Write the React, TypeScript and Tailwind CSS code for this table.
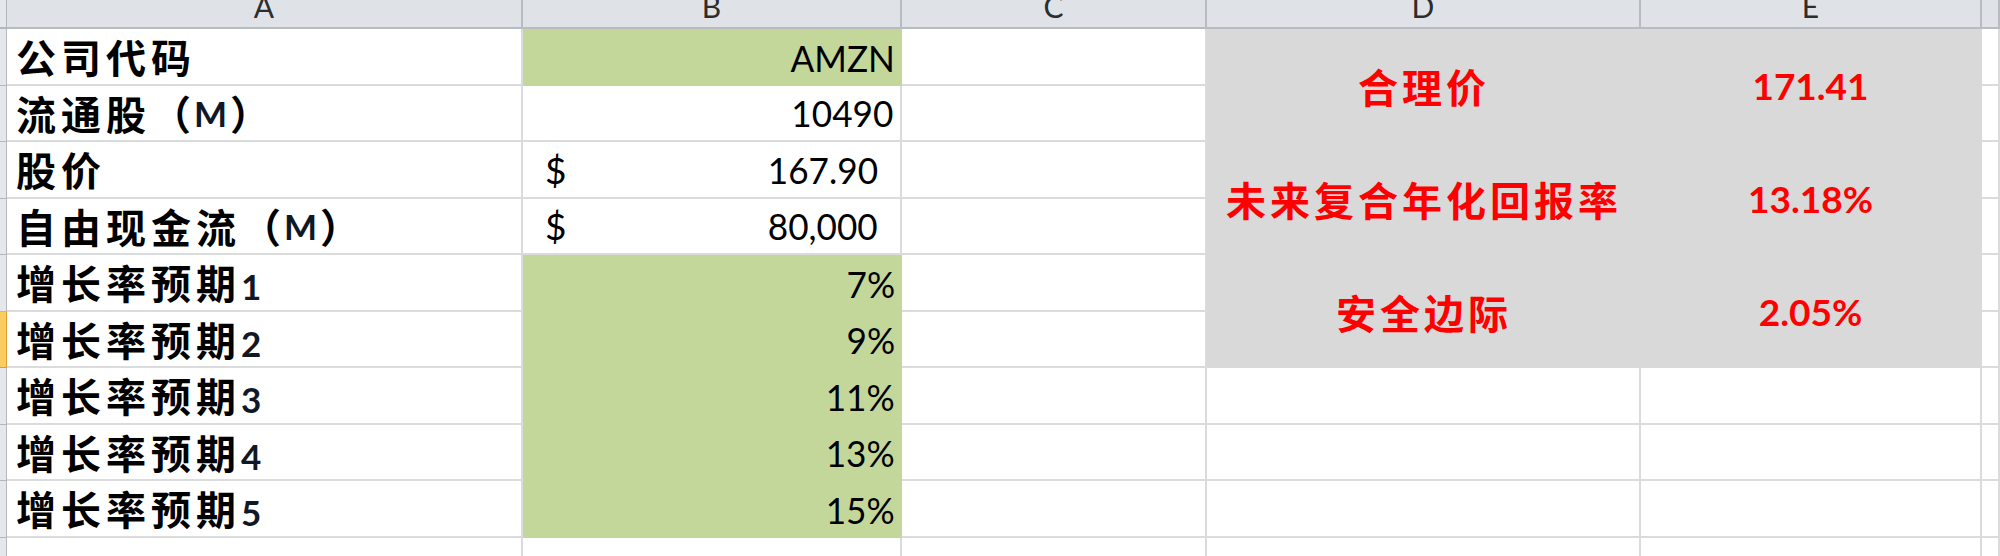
const cjk = '[font-family:"Noto_Sans_CJK_SC","Noto_Sans",sans-serif]';
const latin = '[font-family:Lato,"Open_Sans",sans-serif]';

const cols = ['A', 'B', 'C', 'D', 'E', ''];

const rows: { label: string; tail?: string; tailParen?: boolean; value: string; dollar?: boolean; green?: boolean }[] = [
  { label: '公司代码', value: 'AMZN', green: true },
  { label: '流通股', tail: 'M', tailParen: true, value: '10490' },
  { label: '股价', value: '167.90', dollar: true },
  { label: '自由现金流', tail: 'M', tailParen: true, value: '80,000', dollar: true },
  { label: '增长率预期', tail: '1', value: '7%', green: true },
  { label: '增长率预期', tail: '2', value: '9%', green: true },
  { label: '增长率预期', tail: '3', value: '11%', green: true },
  { label: '增长率预期', tail: '4', value: '13%', green: true },
  { label: '增长率预期', tail: '5', value: '15%', green: true },
];

const summary = [
  { label: '合理价', value: '171.41' },
  { label: '未来复合年化回报率', value: '13.18%' },
  { label: '安全边际', value: '2.05%' },
];

const line = 'border-r-2 border-b-2 border-[#dadbdc]';

function RowHead({ active = false }: { active?: boolean }) {
  return (
    <div
      className={`border-r border-b ${active ? 'border-[#e39d2e] bg-[#f9cd62]' : 'border-[#b3b7bc] bg-[#e4e7eb]'}`}
    />
  );
}

function Label({ label, tail, tailParen }: { label: string; tail?: string; tailParen?: boolean }) {
  return (
    <div className={`flex items-center pl-[9px] ${line}`}>
      <span className={`${cjk} text-[40px] font-bold tracking-[5px] text-black`}>{label}</span>
      {tail && tailParen && (
        <span className="flex items-center">
          <span className={`${cjk} text-[40px] font-bold text-black`}>（</span>
          <span className={`${latin} mx-[3px] text-[35px] font-bold text-[#101828]`}>{tail}</span>
          <span className={`${cjk} text-[40px] font-bold text-black`}>）</span>
        </span>
      )}
      {tail && !tailParen && (
        <span className={`${latin} mt-2 text-[35px] font-bold text-[#101828]`}>{tail}</span>
      )}
    </div>
  );
}

function Value({ value, dollar, green }: { value: string; dollar?: boolean; green?: boolean }) {
  return (
    <div
      className={`flex items-center justify-between ${latin} text-[37px] text-black ${
        green ? 'bg-[#c4d79b]' : `bg-white ${line}`
      } ${dollar ? 'pl-[22px] pr-[22px]' : 'pr-[7px]'}`}
    >
      <span>{dollar ? '$' : ''}</span>
      <span className="origin-right scale-x-[0.95]">{value}</span>
    </div>
  );
}

export default function App() {
  return (
    <div className="h-[556px] w-[2000px] overflow-hidden bg-white">
      <div className="grid grid-cols-[7px_516px_379px_305px_434px_341px_1fr] grid-rows-[29px_repeat(10,56.5px)]">
        {/* header */}
        <div className="border-r border-b-2 border-[#b3b7bc] bg-[#e4e7eb]" />
        {cols.map((c, i) => (
          <div
            key={i}
            className={`flex items-start justify-center overflow-hidden border-r-2 border-b-2 border-[#b8bcc1] bg-[#dfe3e8] ${latin} text-[30px] leading-[30px] text-[#2d2d2d]`}
          >
            <span className="-mt-[9px]">{c}</span>
          </div>
        ))}

        {rows.map((r, i) => {
          const cells = [
            <RowHead key="h" active={i === 5} />,
            <Label key="a" label={r.label} tail={r.tail} tailParen={r.tailParen} />,
            <Value key="b" value={r.value} dollar={r.dollar} green={r.green} />,
            <div key="c" className={line} />,
          ];
          if (i % 2 === 0 && i < 6) {
            const s = summary[i / 2];
            cells.push(
              <div
                key="d"
                className={`row-span-2 flex items-center justify-center bg-[#d9d9d9] ${cjk} text-[40px] font-bold tracking-[4px] text-[#ff0000]`}
              >
                {s.label}
              </div>,
              <div
                key="e"
                className={`row-span-2 flex items-center justify-center border-r-2 border-[#d9d9d9] bg-[#d9d9d9] ${latin} text-[37px] font-bold text-[#ff0000]`}
              >
                <span>{s.value}</span>
              </div>,
            );
          } else if (i >= 6) {
            cells.push(<div key="d" className={line} />, <div key="e" className={line} />);
          }
          cells.push(<div key="f" className={line} />);
          return cells;
        })}

        {/* trailing empty row */}
        <RowHead />
        {cols.map((c) => (
          <div key={`z${c}`} className={line} />
        ))}
      </div>
    </div>
  );
}
